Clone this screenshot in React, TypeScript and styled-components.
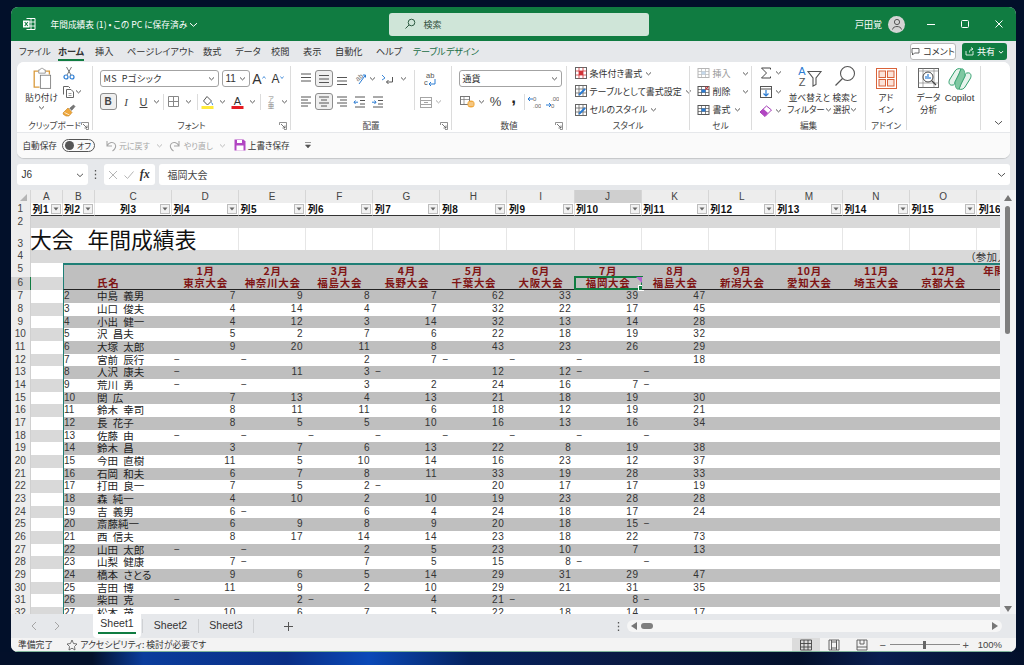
import React from 'react';
import styled, { createGlobalStyle } from 'styled-components';

const UI_FONT = '"Noto Sans CJK JP", "Noto Sans", sans-serif';
const NUM_FONT = '"Liberation Sans", "Noto Sans CJK JP", sans-serif';
const GREEN = '#107c41';
const GRID = '20.5px 31.5px 32.5px 77px repeat(13, 67.1px)';

const GlobalStyle = createGlobalStyle`
  html, body { margin: 0; padding: 0; }
  body { font-family: ${UI_FONT}; font-feature-settings: "palt"; background: #020d22; overflow: hidden; }
  * { box-sizing: border-box; }
`;

// ---- desktop and window ----
const Desktop = styled.div`
  width: 1024px;
  height: 665px;
  padding: 7px 8px 13px 10.5px;
  background:
    linear-gradient(90deg, #03102a 0, #03102a 9%, #0b3d9c 14%, #0a2f86 28%, #0a49b8 36%, #05225f 46%, #0a1a45 60%, #03102a 78%, #0a1e50 86%, #03102a 100%) bottom / 100% 13px no-repeat,
    #02102a;
`;

const Window = styled.div`
  height: 645px;
  display: flex;
  flex-direction: column;
  border-radius: 7px;
  overflow: hidden;
  background: #e6e8eb;
`;

const TitleBar = styled.div`
  height: 34px;
  flex: none;
  display: flex;
  align-items: center;
  background: ${GREEN};
  color: #fff;
  font-size: 9px;
`;

const Logo = styled.div`
  width: 35px;
  padding-left: 11px;
  display: flex;
`;

const DocTitle = styled.div`
  width: 343px;
  padding-left: 5px;
  display: flex;
  align-items: center;
  gap: 2px;
  font-size: 8.7px;
  white-space: nowrap;
`;

const SearchBox = styled.div`
  width: 260px;
  height: 23px;
  display: flex;
  align-items: center;
  gap: 8px;
  padding-left: 15px;
  background: #cfe5d8;
  border-radius: 3px;
  color: #33523f;
  font-size: 9px;
`;

const TitleRight = styled.div`
  margin-left: auto;
  display: flex;
  align-items: center;
  height: 100%;
`;

const UserName = styled.span`
  margin-right: 6px;
`;

const Avatar = styled.div`
  width: 17px;
  height: 17px;
  border-radius: 50%;
  background: #d4d4d4;
  display: flex;
  align-items: center;
  justify-content: center;
  margin-right: 9px;
`;

const WinBtn = styled.div`
  width: 34px;
  display: flex;
  justify-content: center;
`;

// ---- menu tabs ----
const MenuBar = styled.div`
  height: 21px;
  flex: none;
  display: flex;
  align-items: center;
  padding-left: 8.5px;
  position: relative;
`;

const MenuItem = styled.div<{ $w: number; $active?: boolean; $accent?: boolean }>`
  width: ${(p) => p.$w}px;
  font-size: 9.2px;
  font-weight: ${(p) => (p.$active ? 700 : 400)};
  color: ${(p) => (p.$accent ? '#1a6e45' : '#333')};
  letter-spacing: ${(p) => (p.$accent ? -0.3 : 0)}px;
  word-spacing: ${(p) => (p.$accent ? -1 : 0)}px;
  white-space: nowrap;
  line-height: 16px;
  span {
    display: inline-block;
    border-bottom: ${(p) => (p.$active ? `2px solid ${GREEN}` : '2px solid transparent')};
  }
`;

const MenuRight = styled.div`
  margin-left: auto;
  display: flex;
  gap: 6px;
  padding-right: 9px;
`;

const CommentBtn = styled.div`
  width: 46px;
  height: 17px;
  display: flex;
  align-items: center;
  justify-content: center;
  gap: 3px;
  background: #fff;
  border: 1px solid #b9b9b9;
  border-radius: 3px;
  font-size: 9px;
  color: #333;
  white-space: nowrap;
`;

const ShareBtn = styled.div`
  width: 45px;
  height: 17px;
  display: flex;
  align-items: center;
  justify-content: center;
  gap: 3px;
  background: ${GREEN};
  border-radius: 3px;
  font-size: 9px;
  color: #fff;
`;

// ---- ribbon ----
const RibbonCard = styled.div`
  flex: none;
  margin: 0 6px;
  border-radius: 7px;
  overflow: hidden;
  background: #fff;
  box-shadow: 0 1px 1px rgba(0, 0, 0, 0.15);
`;

const Ribbon = styled.div`
  height: 71px;
  display: flex;
  background: #fff;
  position: relative;
  border-bottom: 1.5px solid #e6e8eb;
`;

const Group = styled.div<{ $w: number; $noSep?: boolean }>`
  width: ${(p) => p.$w}px;
  flex: none;
  display: flex;
  flex-direction: column;
  position: relative;
  &::after {
    content: '';
    position: absolute;
    right: 0;
    top: 4px;
    bottom: 2px;
    width: 1px;
    background: ${(p) => (p.$noSep ? 'transparent' : '#dcdcdc')};
  }
`;

const GroupBody = styled.div<{ $pl?: number; $top?: number }>`
  flex: 1;
  display: flex;
  padding: ${(p) => p.$top ?? 8}px 0 0 ${(p) => p.$pl ?? 0}px;
  min-height: 0;
`;

const GroupLabel = styled.div`
  height: 13px;
  text-align: center;
  font-size: 8.6px;
  line-height: 13px;
  color: #444;
  white-space: nowrap;
`;

const Launcher = styled.div`
  position: absolute;
  right: 4px;
  bottom: 2px;
  width: 8px;
  height: 8px;
  display: flex;
`;

const Stack = styled.div<{ $gap?: number; $w?: number; $mt?: number }>`
  display: flex;
  flex-direction: column;
  gap: ${(p) => p.$gap ?? 6}px;
  width: ${(p) => (p.$w ? `${p.$w}px` : 'auto')};
  margin-top: ${(p) => p.$mt ?? 0}px;
  flex: none;
`;

const ToolRow = styled.div<{ $short?: boolean; $ml?: number }>`
  display: flex;
  align-items: center;
  gap: ${(p) => (p.$short ? 2 : 0)}px;
  height: ${(p) => (p.$short ? 15 : 17)}px;
  margin-left: ${(p) => p.$ml ?? 0}px;
`;

const Tool = styled.div<{ $w?: number; $on?: boolean; $ml?: number }>`
  width: ${(p) => p.$w ?? 18}px;
  height: 17px;
  margin-left: ${(p) => p.$ml ?? 0}px;
  flex: none;
  display: flex;
  align-items: center;
  justify-content: center;
  font-size: 11px;
  color: #444;
  font-family: ${NUM_FONT};
  border: ${(p) => (p.$on ? '1px solid #8d8d8d' : 'none')};
  background: ${(p) => (p.$on ? '#efefef' : 'transparent')};
  border-radius: 3px;
`;

const BoldTool = styled(Tool)`
  font-weight: 700;
  font-size: 10px;
`;

const ItalicTool = styled(Tool)`
  font-style: italic;
  font-family: "Liberation Serif", serif;
`;

const UnderTool = styled(Tool)`
  text-decoration: underline;
`;

const PercentTool = styled(Tool)`
  font-size: 13px;
`;

const CommaTool = styled(Tool)`
  font-weight: 700;
  font-size: 17px;
  color: #222;
  padding-bottom: 7px;
`;

const Divider = styled.div<{ $ml?: number; $mr?: number; $h?: number }>`
  width: 1px;
  height: ${(p) => p.$h ?? 16}px;
  margin: 0 ${(p) => p.$mr ?? 0}px 0 ${(p) => p.$ml ?? 0}px;
  background: #dcdcdc;
  flex: none;
`;

const Select = styled.div<{ $w: number; $ml?: number }>`
  width: ${(p) => p.$w}px;
  height: 17px;
  margin-left: ${(p) => p.$ml ?? 0}px;
  flex: none;
  display: flex;
  align-items: center;
  justify-content: space-between;
  padding: 0 3px;
  border: 1px solid #a3a3a3;
  border-radius: 3px;
  background: #fff;
  font-size: 9px;
  color: #333;
  white-space: nowrap;
`;

const FontName = styled.span`
  letter-spacing: 0.5px;
  word-spacing: 2px;
`;

const SizeValue = styled.span`
  font-family: ${NUM_FONT};
  font-size: 10px;
`;

const GrowA = styled.span<{ $big?: boolean }>`
  font-family: ${NUM_FONT};
  font-size: ${(p) => (p.$big ? 14 : 12)}px;
  color: #333;
`;

const BigButton = styled.div<{ $w: number }>`
  width: ${(p) => p.$w}px;
  flex: none;
  display: flex;
  flex-direction: column;
  align-items: center;
  font-size: 8.6px;
  line-height: 11.5px;
  color: #333;
  white-space: nowrap;
  text-align: center;
`;

const BigIcon = styled.div<{ $h?: number }>`
  height: ${(p) => p.$h ?? 24}px;
  display: flex;
  align-items: flex-start;
  justify-content: center;
`;

const BigLine = styled.span`
  display: flex;
  align-items: center;
`;

const LatinLine = styled.span`
  font-family: ${NUM_FONT};
  font-size: 9.5px;
`;

const ListRow = styled.div<{ $disabled?: boolean }>`
  display: flex;
  align-items: center;
  height: 18.4px;
  gap: 3px;
  font-size: 9px;
  color: ${(p) => (p.$disabled ? '#9a9a9a' : '#333')};
  white-space: nowrap;
`;

const ListGap = styled.span`
  margin-left: 8px;
  display: flex;
`;

const RibbonCollapse = styled.div`
  position: absolute;
  right: 7px;
  bottom: 5px;
  display: flex;
`;

const QuickBar = styled.div`
  height: 24.5px;
  display: flex;
  align-items: center;
  padding-left: 6px;
  background: #fafafa;
  font-size: 8.6px;
  color: #333;
  white-space: nowrap;
`;

const Toggle = styled.div`
  width: 33px;
  height: 13px;
  margin: 0 5px;
  display: flex;
  align-items: center;
  padding-left: 2px;
  gap: 3px;
  border: 1px solid #555;
  border-radius: 7px;
  font-size: 8px;
  color: #333;
  &::before {
    content: '';
    width: 9px;
    height: 9px;
    border-radius: 50%;
    background: #555;
  }
`;

const QuickItem = styled.div<{ $disabled?: boolean; $ml?: number }>`
  display: flex;
  align-items: center;
  gap: 2px;
  margin-left: ${(p) => p.$ml ?? 0}px;
  font-size: ${(p) => (p.$disabled ? 8 : 8.6)}px;
  color: ${(p) => (p.$disabled ? '#a6a6a6' : '#333')};
`;

const QuickChev = styled.span`
  margin-left: 4px;
  display: flex;
`;

// ---- formula bar ----
const FormulaRow = styled.div`
  height: 21px;
  flex: none;
  margin: 6.5px 6px 5px;
  display: flex;
  align-items: stretch;
`;

const NameBox = styled.div`
  width: 71px;
  display: flex;
  align-items: center;
  justify-content: space-between;
  padding: 0 4px 0 5px;
  background: #fff;
  border-radius: 3px;
  font-family: ${NUM_FONT};
  font-size: 10px;
  color: #333;
`;

const GripDots = styled.div`
  width: 16px;
  display: flex;
  align-items: center;
  justify-content: center;
`;

const FxBox = styled.div`
  width: 51px;
  display: flex;
  align-items: center;
  justify-content: space-around;
  padding: 0 2px;
  background: #fff;
  border-radius: 3px;
  margin-right: 4px;
`;

const FxLabel = styled.span`
  font-family: "Liberation Serif", serif;
  font-style: italic;
  font-weight: 700;
  font-size: 12px;
  color: #333;
`;

const FormulaInput = styled.div`
  flex: 1;
  display: flex;
  align-items: center;
  justify-content: space-between;
  padding: 0 4px 0 9px;
  background: #fff;
  border-radius: 3px;
  font-size: 10px;
  color: #444;
`;

// ---- sheet ----
const SheetArea = styled.div`
  height: 424px;
  flex: none;
  display: flex;
  background: #fff;
`;

const SheetView = styled.div`
  flex: 1;
  min-width: 0;
  overflow: hidden;
`;

const SheetRow = styled.div<{ $h: number; $bg?: string }>`
  display: grid;
  grid-template-columns: ${GRID};
  width: 1034px;
  height: ${(p) => p.$h}px;
  background: ${(p) => p.$bg ?? '#fff'};
`;

const ColHead = styled.div<{ $active?: boolean }>`
  background: ${(p) => (p.$active ? '#cfcfcf' : '#ededed')};
  border-right: 1px solid #d6d6d6;
  border-bottom: ${(p) => (p.$active ? `1px solid ${GREEN}` : '1px solid #cfcfcf')};
  text-align: center;
  font-family: ${NUM_FONT};
  font-size: 10px;
  line-height: 13px;
  color: #444;
`;

const Corner = styled.div`
  background: #ededed;
  border-right: 1px solid #d6d6d6;
  border-bottom: 1px solid #cfcfcf;
  display: flex;
  align-items: flex-end;
  justify-content: flex-end;
  padding: 0 3px 2px 0;
`;

const RowHead = styled.div<{ $active?: boolean }>`
  background: ${(p) => (p.$active ? '#d2d2d2' : '#ededed')};
  border-right: ${(p) => (p.$active ? `1px solid ${GREEN}` : '1px solid #d0d0d0')};
  text-align: center;
  font-family: ${NUM_FONT};
  font-size: 10px;
  line-height: 12.7px;
  color: #444;
  overflow: hidden;
`;

const TallRowHead = styled(RowHead)`
  display: flex;
  align-items: flex-end;
  justify-content: center;
`;

const FilterCell = styled.div`
  display: flex;
  align-items: center;
  background: #fff;
  border-bottom: 1px solid #333;
  border-right: 1px solid #e2e2e2;
  padding-left: 1.5px;
  overflow: hidden;
  font-size: 10px;
  font-weight: 700;
  color: #111;
  white-space: nowrap;
`;

const FilterLabel = styled.span<{ $center?: boolean }>`
  flex: 1;
  text-align: ${(p) => (p.$center ? 'center' : 'left')};
  font-family: ${NUM_FONT};
  letter-spacing: 0.4px;
`;

const FilterBtn = styled.div`
  width: 10px;
  height: 10.5px;
  flex: none;
  display: flex;
  align-items: center;
  justify-content: center;
  background: #f2f2f2;
  border: 1px solid #bdbdbd;
  margin-right: 1px;
`;

const TitleCell = styled.div`
  grid-column: 2 / 6;
  border-right: 1px solid #e6e6e6;
  font-size: 21.8px;
  line-height: 22px;
  word-spacing: 9px;
  color: #111;
  white-space: nowrap;
  margin-left: -1px;
`;

const BlankCell = styled.div`
  border-right: 1px solid #e6e6e6;
`;

const NoteCell = styled.div`
  grid-column: 16 / 18;
  padding-left: 60px;
  font-size: 10.5px;
  line-height: 13px;
  letter-spacing: 0.4px;
  color: #333;
  white-space: nowrap;
  overflow: hidden;
`;

const ColA = styled.div<{ $stripe?: boolean }>`
  background: ${(p) => (p.$stripe ? '#d9d9d9' : '#fff')};
`;

const TableEdge = styled.div<{ $top?: boolean; $bottom?: boolean }>`
  position: relative;
  background: #bfbfbf;
  border-top: ${(p) => (p.$top ? '2px solid #1f7f76' : 'none')};
  border-bottom: ${(p) => (p.$bottom ? '1px solid #222' : 'none')};
  overflow: visible;
  white-space: nowrap;
  text-align: center;
  font-size: 10.5px;
  font-weight: 700;
  letter-spacing: 0.7px;
  color: #7f1414;
  line-height: 12px;
`;

const FirstEdge = styled(TableEdge)`
  border-left: 1.5px solid #1f7f76;
`;

const NameHead = styled(TableEdge)`
  text-align: left;
  padding-left: 2px;
`;

const YearHead = styled(TableEdge)`
  text-align: left;
  padding-left: 6px;
`;

const SelectBox = styled.div`
  position: absolute;
  inset: -1px -1px -1px -1px;
  border: 2px solid ${GREEN};
  &::before {
    content: '';
    position: absolute;
    right: -1px;
    top: -1px;
    border-top: 6px solid #b565d0;
    border-left: 6px solid transparent;
  }
  &::after {
    content: '';
    position: absolute;
    right: -3px;
    bottom: -3px;
    width: 4px;
    height: 4px;
    background: ${GREEN};
    border: 0.5px solid #fff;
  }
`;

const NoCell = styled.div`
  border-left: 1.5px solid #1f7f76;
  padding-left: 0.5px;
  font-family: ${NUM_FONT};
  font-size: 10px;
  line-height: 12.7px;
  color: #333;
`;

const NameCell = styled.div`
  padding-left: 2px;
  font-size: 10.5px;
  line-height: 12.7px;
  word-spacing: 3px;
  color: #222;
  white-space: nowrap;
  overflow: visible;
`;

const ValueCell = styled.div<{ $dash?: boolean }>`
  padding: ${(p) => (p.$dash ? '0 0 0 2px' : '0 3px 0 0')};
  text-align: ${(p) => (p.$dash ? 'left' : 'right')};
  font-family: ${NUM_FONT};
  font-size: 10px;
  line-height: 12.7px;
  letter-spacing: 0.7px;
  color: #333;
`;

const VScroll = styled.div`
  width: 16px;
  flex: none;
  background: #f1f2f4;
  display: flex;
  flex-direction: column;
  align-items: center;
  padding: 4px 1px 0 0;
`;

const VThumb = styled.div`
  width: 5px;
  height: 128px;
  margin-top: 4px;
  border-radius: 3px;
  background: #7f7f7f;
`;

const VArrowEnd = styled.div`
  margin-top: auto;
  margin-bottom: 1px;
  display: flex;
`;

// ---- tabs / status ----
const TabBar = styled.div`
  height: 24px;
  flex: none;
  display: flex;
  align-items: stretch;
  background: #e6e8eb;
`;

const TabNav = styled.div`
  width: 82.5px;
  display: flex;
  gap: 15px;
  padding-left: 19px;
  align-items: center;
`;

const SheetTab = styled.div<{ $w: number; $active?: boolean }>`
  width: ${(p) => p.$w}px;
  display: flex;
  flex-direction: column;
  align-items: center;
  justify-content: center;
  font-family: ${NUM_FONT};
  font-size: 10.5px;
  color: #333;
  background: ${(p) => (p.$active ? '#fff' : 'transparent')};
  border-radius: 0 0 4px 4px;
  span {
    padding: 0 2px 2px;
    line-height: 13px;
    border-bottom: ${(p) => (p.$active ? `2px solid ${GREEN}` : '2px solid transparent')};
    margin-top: ${(p) => (p.$active ? -2 : 2)}px;
  }
`;

const TabSep = styled.div`
  width: 1px;
  margin: 5px 1px 5px;
  background: #cfd1d4;
`;

const AddTab = styled.div`
  margin-left: 28px;
  display: flex;
  align-items: center;
`;

const ScrollWrap = styled.div`
  margin-left: auto;
  display: flex;
  align-items: center;
  padding-right: 14px;
`;

const HTrack = styled.div`
  width: 375px;
  height: 12px;
  margin-left: 7px;
  border-radius: 6px;
  background: #f6f6f6;
  display: flex;
  align-items: center;
  padding: 0 3px;
`;

const HThumb = styled.div`
  width: 12px;
  height: 6px;
  margin-left: 3px;
  border-radius: 3px;
  background: #7f7f7f;
`;

const TrackEnd = styled.span`
  margin-left: auto;
  display: flex;
`;

const StatusBar = styled.div`
  height: 14px;
  flex: none;
  display: flex;
  align-items: center;
  background: #f3f3f3;
  font-size: 8.8px;
  color: #333;
  padding-left: 7.5px;
  border-bottom: 1px solid #7fb39a;
`;

const StatusA11y = styled.div`
  display: flex;
  align-items: center;
  gap: 2px;
  margin-left: 13px;
`;

const StatusRight = styled.div`
  margin-left: auto;
  height: 100%;
  display: flex;
  align-items: center;
  padding-right: 14px;
`;

const ViewBtn = styled.div<{ $active?: boolean }>`
  width: 28px;
  height: 100%;
  display: flex;
  align-items: center;
  justify-content: center;
  background: ${(p) => (p.$active ? '#dcdcdc' : 'transparent')};
`;

const ZoomSign = styled.span<{ $ml?: number }>`
  width: 10px;
  margin-left: ${(p) => p.$ml ?? 0}px;
  text-align: center;
  font-family: ${NUM_FONT};
  font-size: 11px;
  color: #555;
`;

const Slider = styled.div`
  width: 70px;
  height: 1px;
  background: #8a8a8a;
  margin-left: 2px;
  display: flex;
  justify-content: center;
  align-items: center;
  &::after {
    content: '';
    width: 3px;
    height: 8px;
    background: #666;
  }
`;

const ZoomValue = styled.span`
  margin-left: 7px;
  font-family: ${NUM_FONT};
  font-size: 9.5px;
  color: #444;
`;

// ---- icons ----
const Ic: React.FC<{ w?: number; h?: number; vw?: number; vh?: number; children: React.ReactNode }> = ({ w = 14, h = 14, vw, vh, children }) => (
  <svg width={w} height={h} viewBox={`0 0 ${vw ?? w} ${vh ?? h}`} fill="none" style={{ flex: 'none', display: 'block' }}>
    {children}
  </svg>
);

const Chev: React.FC<{ c?: string; s?: number }> = ({ c = '#555', s = 7 }) => (
  <Ic w={s} h={s}>
    <path d={`M1 ${s * 0.35}L${s / 2} ${s * 0.7}L${s - 1} ${s * 0.35}`} stroke={c} strokeWidth="1" />
  </Ic>
);

const LauncherIcon = () => (
  <Ic w={8} h={8}>
    <path d="M.5 3V.5H7.5V7.5H5" stroke="#777" strokeWidth=".8" />
    <path d="M2 2L6 6M6 3.5V6H3.5" stroke="#555" strokeWidth=".8" />
  </Ic>
);

const ExcelLogo = () => (
  <Ic w={14} h={14}>
    <path d="M4.5 1.5H13V12.5H4.5" stroke="#fff" />
    <path d="M9 1.5V12.5M4.5 5H13M4.5 9H13" stroke="#fff" strokeWidth=".9" />
    <rect x="1" y="3.5" width="6.5" height="7" fill="#fff" />
    <path d="M2.7 5L5.8 9M5.8 5L2.7 9" stroke={GREEN} strokeWidth="1.1" />
  </Ic>
);

const SearchIcon: React.FC<{ c?: string }> = ({ c = '#2e5b42' }) => (
  <Ic w={12} h={12}>
    <circle cx="7.5" cy="4.5" r="3.3" stroke={c} />
    <path d="M5 7L1.5 10.5" stroke={c} />
  </Ic>
);

const PasteIcon = () => (
  <Ic w={20} h={23} vw={24} vh={28}>
    <path d="M8 5H2.5V24.5H9" stroke="#d99a3c" strokeWidth="1.6" />
    <path d="M16 5H21V9" stroke="#d99a3c" strokeWidth="1.6" />
    <path d="M8 5.5V3.5H9.5C10 1 14 1 14.5 3.5H16V7.5H8Z" fill="#fff" stroke="#888" />
    <rect x="10" y="10" width="12.5" height="16" fill="#fff" stroke="#777" />
  </Ic>
);

const ScissorsIcon = () => (
  <Ic w={12} h={14}>
    <path d="M3.5 1L8 9M8.5 1L4 9" stroke="#777" />
    <circle cx="3" cy="11" r="2" stroke="#2b7cd3" strokeWidth="1.2" />
    <circle cx="9" cy="11" r="2" stroke="#2b7cd3" strokeWidth="1.2" />
  </Ic>
);

const CopyIcon = () => (
  <Ic w={13} h={14}>
    <path d="M1.5 9.5V1.5H6.5L8 3" stroke="#666" />
    <path d="M4.5 4.5H9L11.5 7V12.5H4.5Z" stroke="#666" fill="#fff" />
    <path d="M6.5 8.5H9.5M6.5 10.5H9.5" stroke="#888" strokeWidth=".8" />
  </Ic>
);

const BrushIcon = () => (
  <Ic w={14} h={13}>
    <path d="M1 9L6 4L10 8.5L7 12H4L1.5 10.5Z" fill="#f0a83c" stroke="#c47f1a" strokeWidth=".6" />
    <path d="M2.5 8.5L7.5 11" stroke="#fff" strokeWidth=".7" />
    <path d="M7.5 4.5L11.5 1L13 2.5L9.5 6.5" fill="#777" stroke="#555" strokeWidth=".6" />
  </Ic>
);

const BorderIcon = () => (
  <Ic w={13} h={13}>
    <path d="M1.5 1.5H11.5V11.5H1.5ZM6.5 1.5V11.5M1.5 6.5H11.5" stroke="#888" />
  </Ic>
);

const FillIcon = () => (
  <Ic w={13} h={14}>
    <path d="M6 1.5L10.5 6L6.5 10L2.5 6Z" stroke="#555" />
    <path d="M10.5 7.5C11.5 9 12 9.5 11 10" stroke="#2b7cd3" />
    <rect x=".5" y="11" width="12" height="3" fill="#ffeb3b" />
  </Ic>
);

const FontColorIcon = () => (
  <Ic w={13} h={14}>
    <text x="6.5" y="9.5" textAnchor="middle" fontSize="11" fontFamily={NUM_FONT} fill="#333">A</text>
    <rect x=".5" y="11" width="12" height="3" fill="#e51c23" />
  </Ic>
);

const PhoneticIcon = () => (
  <Ic w={10} h={14}>
    <text x="5" y="6" textAnchor="middle" fontSize="6" fill="#888">ア</text>
    <text x="5" y="13" textAnchor="middle" fontSize="6.5" fill="#888">亜</text>
  </Ic>
);

// horizontal text lines: each entry is x start and x end
const AlignLines: React.FC<{ rows: number[][]; y?: number; gap?: number; c?: string }> = ({ rows, y = 2, gap = 3.5, c = '#555' }) => (
  <Ic w={14} h={14}>
    {rows.map((r, i) => (
      <path key={i} d={`M${r[0]} ${y + i * gap}H${r[1]}`} stroke={c} strokeWidth="1" />
    ))}
  </Ic>
);

const OrientIcon = () => (
  <Ic w={14} h={14}>
    <text x="3" y="9" fontSize="7" fontFamily={NUM_FONT} fill="#666" transform="rotate(-40 5 7)">ab</text>
    <path d="M6 12L12.5 3M10 3H12.5V5.5" stroke="#2b7cd3" />
  </Ic>
);

const WrapIcon = () => (
  <Ic w={14} h={14}>
    <path d="M1 3L4 6L1 8" stroke="#2b7cd3" strokeWidth=".9" />
    <path d="M11.5 5V10H5.5M7.5 8L5.5 10L7.5 12" stroke="#555" />
  </Ic>
);

const AbcIcon = () => (
  <Ic w={14} h={16}>
    <text x="3" y="7" fontSize="7.5" fontFamily={NUM_FONT} fill="#555">ab</text>
    <text x="1" y="14" fontSize="7.5" fontFamily={NUM_FONT} fill="#555">c</text>
    <path d="M12 8V13H6M8 11L6 13L8 15" stroke="#2b7cd3" />
  </Ic>
);

const MergeIcon = () => (
  <Ic w={14} h={14}>
    <rect x="1.5" y="2.5" width="11" height="10" stroke="#a5a5a5" />
    <path d="M1.5 5.5H12.5M1.5 9.5H12.5M5 7.5H9" stroke="#a5a5a5" />
  </Ic>
);

const IndentIcon: React.FC<{ out?: boolean }> = ({ out }) => (
  <Ic w={14} h={14}>
    <path d="M2 2H12M7 5.5H12M7 9H12M2 12H12" stroke="#555" />
    <path d={out ? 'M5 7.2H1M2.5 5.5L1 7.2L2.5 9' : 'M1 7.2H5M3.5 5.5L5 7.2L3.5 9'} stroke="#2b7cd3" />
  </Ic>
);

const CurrencyIcon = () => (
  <Ic w={16} h={13}>
    <rect x=".5" y="1.5" width="9" height="8" stroke="#777" />
    <path d="M.5 4.5H9.5M4 1.5V9.5" stroke="#777" strokeWidth=".7" />
    <ellipse cx="11" cy="9" rx="3.6" ry="3.6" fill="#f0a83c" />
    <path d="M8.5 8H13.5M8.5 10H13.5" stroke="#fff" strokeWidth=".7" />
  </Ic>
);

const DecIcon: React.FC<{ inc?: boolean }> = ({ inc }) => (
  <Ic w={14} h={14}>
    <text x="6" y="6" fontSize="6" fontFamily={NUM_FONT} fill="#666">{inc ? '.00' : '0'}</text>
    <text x="6" y="13" fontSize="6" fontFamily={NUM_FONT} fill="#666">{inc ? '0' : '.00'}</text>
    <path d={inc ? 'M1 10H6M4 8L6 10L4 12' : 'M6 4H1M3 2L1 4L3 6'} stroke="#2b7cd3" />
  </Ic>
);

const StyleGridIcon: React.FC<{ accent: string; diag?: boolean }> = ({ accent, diag }) => (
  <Ic w={12} h={12}>
    <rect x=".5" y=".5" width="11" height="11" fill="#fff" stroke="#666" />
    <path d="M.5 4H11.5M.5 8H11.5M4 .5V11.5M8 .5V11.5" stroke={diag ? '#666' : accent} strokeWidth=".8" />
    {diag ? <path d="M4 10L10 4" stroke={accent} strokeWidth="2" /> : <rect x="4" y="4" width="4" height="4" fill={accent} />}
  </Ic>
);

const CellIcon: React.FC<{ kind: 'ins' | 'del' | 'fmt' }> = ({ kind }) => {
  const c = kind === 'ins' ? '#b5b5b5' : '#555';
  const a = kind === 'ins' ? '#c6d9ec' : '#2b7cd3';
  return (
    <Ic w={13} h={12}>
      <rect x="1" y="1.5" width="11" height="9" stroke={c} />
      <path d="M1 4.5H12M1 7.5H12M4.5 1.5V10.5M8.5 1.5V10.5" stroke={c} strokeWidth=".7" />
      <rect x="4.5" y="4.5" width="4" height="3" fill={a} />
      {kind === 'del' && <path d="M8 1.5L11.5 5M11.5 1.5L8 5" stroke="#d13438" />}
    </Ic>
  );
};

const SumIcon = () => (
  <Ic w={14} h={14}>
    <path d="M11.5 3.5V2H2.5L7.5 7L2.5 12H11.5V10.5" stroke="#444" />
  </Ic>
);

const FillDownIcon = () => (
  <Ic w={14} h={14}>
    <rect x="1.5" y="1.5" width="11" height="11" fill="#fff" stroke="#555" />
    <path d="M1.5 4H12.5" stroke="#555" />
    <path d="M7 5V11M4.5 8.5L7 11L9.5 8.5" stroke="#2b7cd3" strokeWidth="1.2" />
  </Ic>
);

const EraserIcon = () => (
  <Ic w={14} h={14}>
    <path d="M1 8L7.5 2L12.5 6L6 12.5Z" fill="#fff" stroke="#a23ab5" />
    <path d="M1 8L4.5 5L9 9L6 12.5Z" fill="#b146c2" />
  </Ic>
);

const SortIcon = () => (
  <Ic w={26} h={23}>
    <text x="5" y="10" textAnchor="middle" fontSize="11" fontFamily={NUM_FONT} fill="#2b7cd3">A</text>
    <text x="5" y="20.5" textAnchor="middle" fontSize="11" fontFamily={NUM_FONT} fill="#555">Z</text>
    <path d="M11 6.5H24L19 13V19.5L16 21V13Z" fill="#fff" stroke="#555" strokeWidth="1.1" />
  </Ic>
);

const FindIcon = () => (
  <Ic w={22} h={22}>
    <circle cx="13.5" cy="8.5" r="7" stroke="#555" strokeWidth="1.1" />
    <path d="M8.5 13.5L1.5 20.5" stroke="#555" strokeWidth="1.2" />
  </Ic>
);

const AddinIcon = () => (
  <Ic w={21} h={21}>
    <rect x=".5" y=".5" width="20" height="20" stroke="#d9633a" fill="#fff" />
    <rect x="3" y="3" width="6.5" height="6.5" stroke="#d9633a" fill="#fbe3d9" />
    <rect x="11.5" y="3" width="6.5" height="6.5" stroke="#d9633a" fill="#fbe3d9" />
    <rect x="3" y="11.5" width="6.5" height="6.5" stroke="#d9633a" fill="#fbe3d9" />
    <rect x="11.5" y="11.5" width="6.5" height="6.5" stroke="#d9633a" fill="#fbe3d9" />
  </Ic>
);

const AnalysisIcon = () => (
  <Ic w={21} h={21}>
    <rect x=".5" y=".5" width="20" height="19" stroke="#666" fill="#fff" />
    <path d="M.5 3H20.5M.5 15H20.5M5 .5V19.5M16 .5V19.5" stroke="#888" strokeWidth=".7" />
    <circle cx="10" cy="9" r="5" fill="#fff" stroke="#444" />
    <path d="M8 11V8M10 11V6M12 11V9" stroke="#2b7cd3" strokeWidth="1.2" />
    <path d="M13.5 12.5L18 17" stroke="#444" strokeWidth="1.2" />
  </Ic>
);

const CopilotIcon = () => (
  <Ic w={24} h={22}>
    <path d="M5 17C1 18 0 14 2 11L7 3C8 1 11 0 13 1L11 6L7 14C7 16 6 17 5 17Z" fill="#e6f3ec" stroke="#2e9e6b" />
    <path d="M19 5C23 4 24 8 22 11L17 19C16 21 13 22 11 21L13 16L17 8C17 6 18 5 19 5Z" fill="#e6f3ec" stroke="#2e9e6b" />
    <path d="M11 6L13 1C15 0 17 2 17 8L13 16L11 21C9 22 7 20 7 14Z" fill="#7fc8a2" stroke="#2e9e6b" strokeWidth=".7" />
  </Ic>
);

const UndoIcon = () => (
  <Ic w={13} h={13}>
    <path d="M3 2V7H8M3 7C5 3 9 2.5 11 5C12.5 7 11.5 10 8.5 12" stroke="#a6a6a6" strokeWidth="1.1" />
  </Ic>
);

const RedoIcon = () => (
  <Ic w={13} h={13}>
    <path d="M10 2V7H5M10 7C8 3 4 2.5 2 5C.5 7 1.5 10 4.5 12" stroke="#a6a6a6" strokeWidth="1.1" />
  </Ic>
);

const SaveIcon = () => (
  <Ic w={12} h={12}>
    <path d="M.5.5H9.5L11.5 2.5V11.5H.5Z" fill="#b146c2" />
    <rect x="3" y="1" width="5" height="3" fill="#fff" />
    <rect x="2.5" y="6.5" width="7" height="5" fill="#fff" />
  </Ic>
);

const GridViewIcon = () => (
  <Ic w={12} h={12}>
    <path d="M.5 1H11.5V11H.5ZM.5 4.5H11.5M.5 8H11.5M4 1V11M8 1V11" stroke="#444" strokeWidth=".9" />
  </Ic>
);

const PageViewIcon = () => (
  <Ic w={12} h={12}>
    <path d="M1 1H11V11H1ZM3.5 1V11M8.5 1V11M3.5 3H8.5V9H3.5" stroke="#555" strokeWidth=".9" />
  </Ic>
);

const BreakViewIcon = () => (
  <Ic w={12} h={12}>
    <path d="M1 1H11V11H1ZM1 8H11M4 1V5H8V1" stroke="#555" strokeWidth=".9" />
  </Ic>
);

const MiniTri: React.FC<{ dir: 'up' | 'down' | 'left' | 'right' }> = ({ dir }) => {
  const d = { up: 'M4 1L8 7H0Z', down: 'M0 1H8L4 7Z', left: 'M7 0V8L1 4Z', right: 'M1 0V8L7 4Z' }[dir];
  return (
    <Ic w={8} h={8}>
      <path d={d} fill="#777" />
    </Ic>
  );
};

const FilterArrow = () => (
  <Ic w={6} h={4}>
    <path d="M.5.5H5.5L3 3.5Z" fill="#666" />
  </Ic>
);

// ---- data ----
const COLS = 'A B C D E F G H I J K L M N O P'.split(' ');
const MONTHS = ['1月', '2月', '3月', '4月', '5月', '6月', '7月', '8月', '9月', '10月', '11月', '12月'];
const EVENTS = ['東京大会', '神奈川大会', '福島大会', '長野大会', '千葉大会', '大阪大会', '福岡大会', '福島大会', '新潟大会', '愛知大会', '埼玉大会', '京都大会'];

const PLAYERS: [string, string, string][] = [
  ['2', '中島 義男', '7 9 8 7 62 33 39 47'],
  ['3', '山口 俊夫', '4 14 4 7 32 22 17 45'],
  ['4', '小出 健一', '4 12 3 14 32 13 14 28'],
  ['5', '沢 昌夫', '5 2 7 6 22 18 19 32'],
  ['6', '大塚 太郎', '9 20 11 8 43 23 26 29'],
  ['7', '宮前 辰行', '- - 2 7 - - - 18'],
  ['8', '人沢 康夫', '- 11 3 - 12 12 - -'],
  ['9', '荒川 勇', '- - 3 2 24 16 7 -'],
  ['10', '関 広', '7 13 4 13 21 18 19 30'],
  ['11', '鈴木 幸司', '8 11 11 6 18 12 19 21'],
  ['12', '長 花子', '8 5 5 10 16 13 16 34'],
  ['13', '佐藤 由', '- - - - - - - -'],
  ['14', '鈴木 昌', '3 7 6 13 22 8 19 38'],
  ['15', '今田 直樹', '11 5 10 14 16 23 12 37'],
  ['16', '石岡 和夫', '6 7 8 11 33 19 28 33'],
  ['17', '打田 良一', '7 5 2 - 20 17 17 19'],
  ['18', '森 純一', '4 10 2 10 19 23 28 28'],
  ['19', '吉 義男', '6 - 6 4 24 18 17 24'],
  ['20', '斎藤純一', '6 9 8 9 20 18 15 -'],
  ['21', '西 信夫', '8 17 14 14 23 18 22 73'],
  ['22', '山田 太郎', '- - 2 5 23 10 7 13'],
  ['23', '山梨 健康', '7 - 7 5 15 8 - -'],
  ['24', '橋本 さとる', '9 6 5 14 29 31 29 47'],
  ['25', '吉田 博', '11 9 2 10 29 21 31 35'],
  ['26', '柴田 克', '- 2 - 4 21 - 8 -'],
  ['27', '松本 茂', '10 6 7 5 22 18 14 17'],
];

const RH = 12.68;

const Sheet = () => (
  <SheetView>
    <SheetRow $h={13}>
      <Corner>
        <Ic w={7} h={7}>
          <path d="M7 0V7H0Z" fill="#b5b5b5" />
        </Ic>
      </Corner>
      {COLS.map((c) => (
        <ColHead key={c} $active={c === 'J'}>{c}</ColHead>
      ))}
    </SheetRow>
    <SheetRow $h={RH}>
      <RowHead>1</RowHead>
      {COLS.map((c, i) => (
        <FilterCell key={c}>
          <FilterLabel $center={c === 'C'}>列{i + 1}</FilterLabel>
          <FilterBtn>
            <FilterArrow />
          </FilterBtn>
        </FilterCell>
      ))}
    </SheetRow>
    <SheetRow $h={RH} $bg="#d9d9d9">
      <RowHead>2</RowHead>
    </SheetRow>
    <SheetRow $h={21.6}>
      <TallRowHead>3</TallRowHead>
      <TitleCell>大会 年間成績表</TitleCell>
      {COLS.slice(4).map((c) => (
        <BlankCell key={c} />
      ))}
    </SheetRow>
    <SheetRow $h={13} $bg="#d9d9d9">
      <RowHead>4</RowHead>
      <NoteCell>（参加人数</NoteCell>
    </SheetRow>
    <SheetRow $h={14}>
      <RowHead>5</RowHead>
      <ColA />
      <FirstEdge $top />
      <TableEdge $top />
      {MONTHS.map((m) => (
        <TableEdge key={m} $top>{m}</TableEdge>
      ))}
      <YearHead $top>年間</YearHead>
    </SheetRow>
    <SheetRow $h={13.4}>
      <RowHead $active>6</RowHead>
      <ColA $stripe />
      <FirstEdge $bottom />
      <NameHead $bottom>氏名</NameHead>
      {EVENTS.map((e, i) => (
        <TableEdge key={i} $bottom>
          {e}
          {i === 6 && <SelectBox />}
        </TableEdge>
      ))}
      <TableEdge $bottom />
    </SheetRow>
    {PLAYERS.map(([no, name, scores], i) => (
      <SheetRow key={no} $h={RH} $bg={i % 2 === 0 ? '#bfbfbf' : '#fff'}>
        <RowHead>{i + 7}</RowHead>
        <ColA $stripe={i % 2 === 1} />
        <NoCell>{no}</NoCell>
        <NameCell>{name}</NameCell>
        {scores.split(' ').map((v, j) => (
          <ValueCell key={j} $dash={v === '-'}>{v === '-' ? '−' : v}</ValueCell>
        ))}
      </SheetRow>
    ))}
  </SheetView>
);

const RibbonArea = () => (
  <RibbonCard>
    <Ribbon>
      <Group $w={76}>
        <GroupBody $pl={7} $top={5}>
          <BigButton $w={36}>
            <BigIcon $h={25}>
              <PasteIcon />
            </BigIcon>
            <span>貼り付け</span>
            <Chev />
          </BigButton>
          <Stack $gap={1.5} $w={30} $mt={-2.5}>
            <Tool $w={14} $ml={2}><ScissorsIcon /></Tool>
            <ToolRow $ml={2}>
              <CopyIcon />
              <Chev />
            </ToolRow>
            <Tool $w={14} $ml={2}><BrushIcon /></Tool>
          </Stack>
        </GroupBody>
        <GroupLabel>クリップボード</GroupLabel>
        <Launcher>
          <LauncherIcon />
        </Launcher>
      </Group>

      <Group $w={198}>
        <GroupBody $pl={7}>
          <Stack>
            <ToolRow>
              <Select $w={119}>
                <FontName>MS Pゴシック</FontName>
                <Chev />
              </Select>
              <Select $w={28} $ml={3}>
                <SizeValue>11</SizeValue>
                <Chev />
              </Select>
              <Tool $w={19}>
                <GrowA $big>A</GrowA>
                <Ic w={4} h={8}><path d="M.5 3.5L2 1.5L3.5 3.5" stroke="#2b7cd3" strokeWidth=".8" /></Ic>
              </Tool>
              <Tool $w={18}>
                <GrowA>A</GrowA>
                <Ic w={4} h={8}><path d="M.5 1.5L2 3.5L3.5 1.5" stroke="#2b7cd3" strokeWidth=".8" /></Ic>
              </Tool>
            </ToolRow>
            <ToolRow>
              <BoldTool $w={17} $on>B</BoldTool>
              <ItalicTool $w={17} $ml={1}>I</ItalicTool>
              <UnderTool $w={18}>U</UnderTool>
              <Tool $w={8}><Chev /></Tool>
              <Divider $ml={2} $mr={3} />
              <Tool $w={14}><BorderIcon /></Tool>
              <Tool $w={12} $ml={2}><Chev /></Tool>
              <Divider $ml={2} $mr={2} />
              <Tool $w={16}><FillIcon /></Tool>
              <Tool $w={10} $ml={2}><Chev /></Tool>
              <Tool $w={16} $ml={2}><FontColorIcon /></Tool>
              <Tool $w={10} $ml={2}><Chev /></Tool>
              <Divider $ml={2} $mr={4} />
              <Tool $w={12}><PhoneticIcon /></Tool>
              <Tool $w={12} $ml={2}><Chev /></Tool>
            </ToolRow>
          </Stack>
        </GroupBody>
        <GroupLabel>フォント</GroupLabel>
        <Launcher>
          <LauncherIcon />
        </Launcher>
      </Group>

      <Group $w={161}>
        <GroupBody $pl={6}>
          <Stack $w={117}>
            <ToolRow>
              <Tool><AlignLines rows={[[2, 12], [2, 12], [2, 12]]} y={2} /></Tool>
              <Tool $on><AlignLines rows={[[2, 12], [2, 12], [2, 12]]} y={3.5} /></Tool>
              <Tool><AlignLines rows={[[2, 12], [2, 12], [2, 12]]} y={5.5} /></Tool>
              <Tool><OrientIcon /></Tool>
              <Tool $w={7}><Chev /></Tool>
              <Tool $ml={3}><WrapIcon /></Tool>
              <Tool $w={10} $ml={2}><Chev /></Tool>
            </ToolRow>
            <ToolRow>
              <Tool><AlignLines rows={[[2, 12], [2, 9], [2, 12], [2, 9]]} y={2} gap={3} /></Tool>
              <Tool $on><AlignLines rows={[[2, 12], [4, 10], [2, 12], [4, 10]]} y={2} gap={3} /></Tool>
              <Tool><AlignLines rows={[[2, 12], [5, 12], [2, 12], [5, 12]]} y={2} gap={3} /></Tool>
              <Tool><IndentIcon out /></Tool>
              <Tool><IndentIcon /></Tool>
            </ToolRow>
          </Stack>
          <Divider $h={40} />
          <Stack $gap={6}>
            <Tool $w={26} $ml={2}><AbcIcon /></Tool>
            <ToolRow $ml={3}>
              <Tool $w={16}><MergeIcon /></Tool>
              <Tool $w={10}><Chev c="#aaa" /></Tool>
            </ToolRow>
          </Stack>
        </GroupBody>
        <GroupLabel>配置</GroupLabel>
        <Launcher>
          <LauncherIcon />
        </Launcher>
      </Group>

      <Group $w={115}>
        <GroupBody $pl={7}>
          <Stack>
            <Select $w={103}>
              <span>通貨</span>
              <Chev />
            </Select>
            <ToolRow>
              <Tool $w={18}><CurrencyIcon /></Tool>
              <Tool $w={10}><Chev /></Tool>
              <PercentTool $w={18}>%</PercentTool>
              <CommaTool $w={18}>,</CommaTool>
              <Divider $ml={1} />
              <Tool $w={19}><DecIcon /></Tool>
              <Tool $w={17}><DecIcon inc /></Tool>
            </ToolRow>
          </Stack>
        </GroupBody>
        <GroupLabel>数値</GroupLabel>
        <Launcher>
          <LauncherIcon />
        </Launcher>
      </Group>

      <Group $w={123}>
        <GroupBody $pl={8} $top={2}>
          <Stack $gap={0}>
            <ListRow><StyleGridIcon accent="#d13438" />条件付き書式<Chev /></ListRow>
            <ListRow><StyleGridIcon accent="#2b7cd3" diag />テーブルとして書式設定<Chev /></ListRow>
            <ListRow><StyleGridIcon accent="#2b7cd3" diag />セルのスタイル<Chev /></ListRow>
          </Stack>
        </GroupBody>
        <GroupLabel>スタイル</GroupLabel>
      </Group>

      <Group $w={62}>
        <GroupBody $pl={7} $top={2}>
          <Stack $gap={0}>
            <ListRow $disabled><CellIcon kind="ins" />挿入<ListGap><Chev /></ListGap></ListRow>
            <ListRow><CellIcon kind="del" />削除<ListGap><Chev /></ListGap></ListRow>
            <ListRow><CellIcon kind="fmt" />書式<Chev /></ListRow>
          </Stack>
        </GroupBody>
        <GroupLabel>セル</GroupLabel>
      </Group>

      <Group $w={114}>
        <GroupBody $pl={7} $top={3}>
          <Stack $gap={4} $w={29}>
            <ToolRow $short><SumIcon /><Chev /></ToolRow>
            <ToolRow $short><FillDownIcon /><Chev /></ToolRow>
            <ToolRow $short><EraserIcon /><Chev /></ToolRow>
          </Stack>
          <BigButton $w={44}>
            <BigIcon $h={27}><SortIcon /></BigIcon>
            <span>並べ替えと</span>
            <BigLine>フィルター<Chev /></BigLine>
          </BigButton>
          <BigButton $w={27}>
            <BigIcon $h={27}><FindIcon /></BigIcon>
            <span>検索と</span>
            <BigLine>選択<Chev /></BigLine>
          </BigButton>
        </GroupBody>
        <GroupLabel>編集</GroupLabel>
      </Group>

      <Group $w={41}>
        <GroupBody $top={6}>
          <BigButton $w={41}>
            <BigIcon><AddinIcon /></BigIcon>
            <span>アド</span>
            <span>イン</span>
          </BigButton>
        </GroupBody>
        <GroupLabel>アドイン</GroupLabel>
      </Group>

      <Group $w={74}>
        <GroupBody $pl={4} $top={6}>
          <BigButton $w={36}>
            <BigIcon><AnalysisIcon /></BigIcon>
            <span>データ</span>
            <span>分析</span>
          </BigButton>
          <BigButton $w={26}>
            <BigIcon><CopilotIcon /></BigIcon>
            <LatinLine>Copilot</LatinLine>
          </BigButton>
        </GroupBody>
      </Group>

      <RibbonCollapse>
        <Chev s={9} />
      </RibbonCollapse>
    </Ribbon>
    <QuickBar>
      自動保存
      <Toggle>オフ</Toggle>
      <QuickItem $disabled $ml={4}><UndoIcon />元に戻す<QuickChev><Chev c="#bbb" /></QuickChev></QuickItem>
      <QuickItem $disabled $ml={6}><RedoIcon />やり直し<QuickChev><Chev c="#bbb" /></QuickChev></QuickItem>
      <QuickItem $ml={8}><SaveIcon />上書き保存</QuickItem>
      <QuickItem $ml={14}>
        <Ic w={8} h={8}><path d="M1 1.5H7M1.5 4H6.5L4 7Z" fill="#555" stroke="#555" strokeWidth=".6" /></Ic>
      </QuickItem>
    </QuickBar>
  </RibbonCard>
);

const MENU: [string, number][] = [
  ['ファイル', 39], ['ホーム', 37], ['挿入', 32], ['ページレイアウト', 76], ['数式', 32], ['データ', 36],
  ['校閲', 32], ['表示', 32], ['自動化', 41], ['ヘルプ', 37],
];

export default function App() {
  return (
    <>
      <GlobalStyle />
      <Desktop>
        <Window>
          <TitleBar>
            <Logo><ExcelLogo /></Logo>
            <DocTitle>
              年間成績表 (1) • この PC に保存済み
              <Chev c="#fff" s={9} />
            </DocTitle>
            <SearchBox>
              <SearchIcon />
              検索
            </SearchBox>
            <TitleRight>
              <UserName>戸田覚</UserName>
              <Avatar>
                <Ic w={12} h={12}>
                  <circle cx="6" cy="4" r="2.6" stroke="#555" />
                  <path d="M1.5 11.5C2 7.5 10 7.5 10.5 11.5" stroke="#555" />
                </Ic>
              </Avatar>
              <WinBtn><Ic w={10} h={10}><path d="M1 5.5H9" stroke="#fff" /></Ic></WinBtn>
              <WinBtn><Ic w={10} h={10}><rect x="1.5" y="1.5" width="7" height="7" rx="1" stroke="#fff" /></Ic></WinBtn>
              <WinBtn><Ic w={10} h={10}><path d="M1.5 1.5L8.5 8.5M8.5 1.5L1.5 8.5" stroke="#fff" /></Ic></WinBtn>
            </TitleRight>
          </TitleBar>

          <MenuBar>
            {MENU.map(([m, w]) => (
              <MenuItem key={m} $w={w} $active={m === 'ホーム'}><span>{m}</span></MenuItem>
            ))}
            <MenuItem $w={80} $accent><span>テーブル デザイン</span></MenuItem>
            <MenuRight>
              <CommentBtn>
                <Ic w={9} h={9}><path d="M1 1.5H8V6H3.5L1.5 8V6H1Z" stroke="#444" strokeWidth=".8" /></Ic>
                コメント
              </CommentBtn>
              <ShareBtn>
                <Ic w={9} h={9}><path d="M1 4V8H8V4M4.5 5.5C4.5 3 6 2 7.5 2M6 .5L8 2L6 3.5" stroke="#fff" strokeWidth=".8" /></Ic>
                共有
                <Chev c="#fff" s={6} />
              </ShareBtn>
            </MenuRight>
          </MenuBar>

          <RibbonArea />

          <FormulaRow>
            <NameBox>J6<Chev s={8} /></NameBox>
            <GripDots>
              <Ic w={3} h={11}><path d="M1.5 1V2.5M1.5 4.8V6.2M1.5 8.5V10" stroke="#555" strokeWidth="1.3" /></Ic>
            </GripDots>
            <FxBox>
              <Ic w={10} h={10}><path d="M1 1L9 9M9 1L1 9" stroke="#b5b5b5" /></Ic>
              <Ic w={10} h={10}><path d="M.5 5.5L3.5 8.5L9.5 1.5" stroke="#b5b5b5" /></Ic>
              <FxLabel>fx</FxLabel>
            </FxBox>
            <FormulaInput>福岡大会<Chev s={9} /></FormulaInput>
          </FormulaRow>

          <SheetArea>
            <Sheet />
            <VScroll>
              <MiniTri dir="up" />
              <VThumb />
              <VArrowEnd><MiniTri dir="down" /></VArrowEnd>
            </VScroll>
          </SheetArea>

          <TabBar>
            <TabNav>
              <Ic w={8} h={10}><path d="M6 1L2 5L6 9" stroke="#a5a5a5" /></Ic>
              <Ic w={8} h={10}><path d="M2 1L6 5L2 9" stroke="#a5a5a5" /></Ic>
            </TabNav>
            <SheetTab $w={48} $active><span>Sheet1</span></SheetTab>
            <TabSep />
            <SheetTab $w={53}><span>Sheet2</span></SheetTab>
            <TabSep />
            <SheetTab $w={52}><span>Sheet3</span></SheetTab>
            <TabSep />
            <AddTab>
              <Ic w={11} h={11}><path d="M5.5 1V10M1 5.5H10" stroke="#555" /></Ic>
            </AddTab>
            <ScrollWrap>
              <Ic w={3} h={11}><path d="M1.5 1V2.5M1.5 4.8V6.2M1.5 8.5V10" stroke="#555" strokeWidth="1.3" /></Ic>
              <HTrack>
                <MiniTri dir="left" />
                <HThumb />
                <TrackEnd><MiniTri dir="right" /></TrackEnd>
              </HTrack>
            </ScrollWrap>
          </TabBar>

          <StatusBar>
            準備完了
            <StatusA11y>
              <Ic w={12} h={12}>
                <path d="M6 1L7.5 4.5L11 5L8.5 7.5L9 11L6 9.2L3 11L3.5 7.5L1 5L4.5 4.5Z" stroke="#555" strokeWidth=".8" />
              </Ic>
              アクセシビリティ: 検討が必要です
            </StatusA11y>
            <StatusRight>
              <ViewBtn $active><GridViewIcon /></ViewBtn>
              <ViewBtn><PageViewIcon /></ViewBtn>
              <ViewBtn><BreakViewIcon /></ViewBtn>
              <ZoomSign $ml={2}>−</ZoomSign>
              <Slider />
              <ZoomSign $ml={1}>+</ZoomSign>
              <ZoomValue>100%</ZoomValue>
            </StatusRight>
          </StatusBar>
        </Window>
      </Desktop>
    </>
  );
}
